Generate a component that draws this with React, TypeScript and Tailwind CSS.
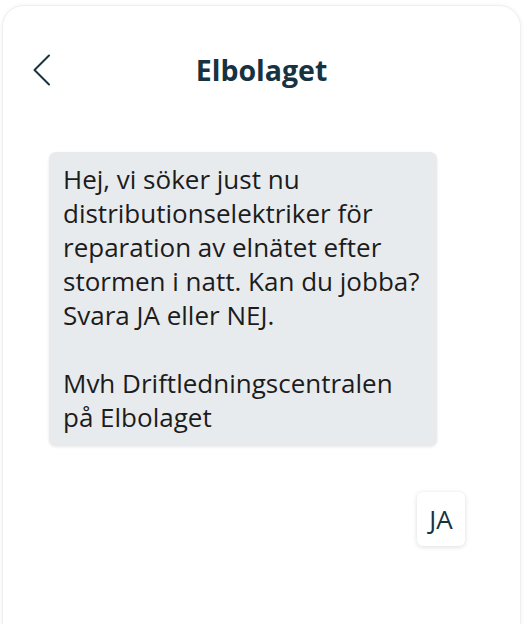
export default function App() {
  return (
    <div className="h-[624px] w-[530px] overflow-hidden bg-white pt-[5px] pl-[2px] pr-[9px]" style={{ fontFamily: '"Open Sans", sans-serif' }}>
      <div className="h-[700px] rounded-t-[22px] border border-[#efefef] bg-white shadow-[0_0_4px_rgba(0,0,0,0.06)]">
        {/* header */}
        <div className="relative flex h-[128px] items-start justify-center pt-[42px]">
          <button className="absolute left-[30px] top-[48px] text-[#173240]" aria-label="Back">
            <svg width="18" height="32" viewBox="0 0 18 32" fill="none" stroke="currentColor" strokeWidth="2" strokeLinecap="round" strokeLinejoin="round">
              <polyline points="16,1.5 1.5,16 16,30.5" />
            </svg>
          </button>
          <h1 className="text-[28.5px] font-bold leading-[44px] text-[#173240]">Elbolaget</h1>
        </div>

        {/* messages */}
        <div className="flex flex-col px-[46px] pt-[18px]">
          <div className="w-[388px] rounded-[7px] bg-[#e8ebee] pl-[14px] pr-2 pt-[10px] pb-[12px] text-[26px] leading-[34px] text-[#1c1c1c] shadow-[0_1px_3px_rgba(0,0,0,0.1)]">
            <p>
              Hej, vi söker just nu distributionselektriker för reparation av elnätet efter stormen i natt. Kan du jobba? Svara JA eller NEJ.
            </p>
            <p className="mt-[34px]">Mvh Driftledningscentralen på Elbolaget</p>
          </div>

          <div className="mt-[46px] flex justify-end pr-[9px]">
            <div className="flex h-[54px] w-[48px] items-center justify-center rounded-[6px] bg-white text-[26px] text-[#173240] shadow-[0_1px_5px_rgba(0,0,0,0.14)]">
              JA
            </div>
          </div>
        </div>
      </div>
    </div>
  )
}
